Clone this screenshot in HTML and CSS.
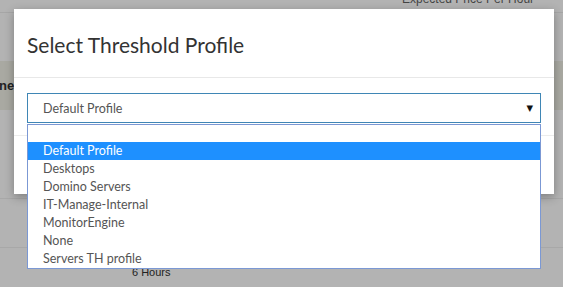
FILE: index.html
```html
<!DOCTYPE html>
<html>
<head>
<meta charset="utf-8">
<link rel="stylesheet" href="styles.css">
</head>
<body>
<div class="page">
  <div class="topbar"><span class="col-title">Expected Price Per Hour</span></div>
  <div class="spacer"></div>
  <div class="thead"><span class="th">ne</span></div>
  <div class="row r1"></div>
  <div class="row r2"></div>
  <div class="row r3"><span class="cell">6 Hours</span></div>
</div>

<div class="modal">
  <div class="modal-header"><h4 class="modal-title">Select Threshold Profile</h4></div>
  <div class="modal-body">
    <div class="select">
      <span class="select-value">Default Profile</span>
      <span class="caret">▼</span>
    </div>
  </div>
  <div class="modal-footer"></div>
</div>

<ul class="options">
  <li class="opt empty"></li>
  <li class="opt active">Default Profile</li>
  <li class="opt">Desktops</li>
  <li class="opt">Domino Servers</li>
  <li class="opt">IT-Manage-Internal</li>
  <li class="opt">MonitorEngine</li>
  <li class="opt">None</li>
  <li class="opt">Servers TH profile</li>
</ul>
</body>
</html>
```
FILE: styles.css
```css
html, body { margin: 0; padding: 0; }
body {
  width: 563px;
  height: 287px;
  overflow: hidden;
  background: #b3b3b3;
  font-family: "Liberation Sans", Arial, sans-serif;
  position: relative;
}
.page { display: flex; flex-direction: column; }
.topbar {
  height: 12px;
  border-bottom: 1px solid #a6a6a6;
  padding-left: 402px;
  overflow: hidden;
}
.col-title {
  display: block;
  font-size: 12px;
  line-height: 12px;
  margin-top: -7px;
  color: #444;
}
.spacer { height: 48px; }
.thead {
  height: 49px;
  background: #a9a9a2;
  display: flex;
  align-items: center;
}
.th { font-weight: bold; font-size: 13px; color: #222; margin-left: -1px; }
.row { border-bottom: 1px solid #a8a8a8; }
.r1 { height: 88px; }
.r2 { height: 48px; }
.r3 { height: 39px; padding-left: 132px; display: flex; align-items: center; }
.cell { font-size: 11px; color: #222; margin-top: 8px; }

.modal {
  position: absolute;
  left: 14px;
  top: 9px;
  width: 540px;
  height: 185px;
  background: #fff;
  box-shadow: 0 3px 9px rgba(0,0,0,0.3);
  font-family: Lato, "Open Sans", sans-serif;
  display: flex;
  flex-direction: column;
}
.modal-header {
  height: 69px;
  border-bottom: 1px solid #e8e8e8;
  padding-left: 13px;
  display: flex;
  align-items: center;
  box-sizing: border-box;
  padding-top: 2px;
}
.modal-title {
  margin: 0;
  font-weight: normal;
  font-size: 21px;
  color: #333;
}
.modal-body {
  padding: 15px 13px 0 13px;
  height: 58px;
  box-sizing: border-box;
  border-bottom: 1px solid #ececec;
}
.select {
  height: 30px;
  box-sizing: border-box;
  border: 1px solid #3f86b5;
  display: flex;
  align-items: center;
  padding-left: 15px;
  padding-right: 7px;
}
.select-value { flex: 1; font-size: 12.5px; color: #555; }
.caret { font-size: 8.5px; color: #111; font-family: "DejaVu Sans", sans-serif; }
.modal-footer { flex: 1; }

.options {
  position: absolute;
  left: 27px;
  top: 124px;
  width: 512px;
  margin: 0;
  padding: 0;
  list-style: none;
  background: #fff;
  border: 1px solid #7b98d4;
  font-family: Lato, "Open Sans", sans-serif;
  font-size: 12.5px;
  color: #555;
}
.opt { height: 18px; line-height: 18px; padding-left: 15px; }
.opt.empty { height: 17px; }
.opt.active { background: #1e90ff; color: #fff; }
```
